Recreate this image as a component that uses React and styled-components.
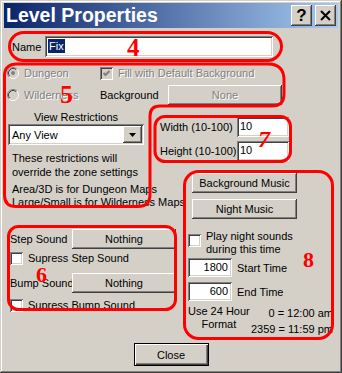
import React from "react";
import styled, { createGlobalStyle } from "styled-components";

const GlobalStyle = createGlobalStyle`
  html, body {
    margin: 0;
    padding: 0;
    background: #d4d0c8;
  }
  body {
    font-family: "Liberation Sans", Arial, sans-serif;
    font-size: 11px;
    color: #000;
  }
`;

const raised = `
  background: #d4d0c8;
  box-shadow: inset -1px -1px #404040, inset 1px 1px #ffffff,
    inset -2px -2px #808080, inset 2px 2px #d4d0c8;
`;

const sunken = `
  box-shadow: inset 1px 1px #808080, inset -1px -1px #ffffff,
    inset 2px 2px #404040, inset -2px -2px #d4d0c8;
`;

const Window = styled.div`
  position: relative;
  box-sizing: border-box;
  width: 342px;
  height: 373px;
  padding: 3px 4px 4px 4px;
  background: #d4d0c8;
  box-shadow: inset -1px -1px #404040, inset 1px 1px #d4d0c8,
    inset -2px -2px #808080, inset 2px 2px #ffffff;
  display: flex;
  flex-direction: column;
`;

const TitleBar = styled.div`
  height: 25px;
  display: flex;
  align-items: center;
  padding-left: 2px;
  background: linear-gradient(to right, #0a246a, #a6caf0);
`;

const Title = styled.div`
  color: #fff;
  font-weight: bold;
  font-size: 19.5px;
  line-height: 25px;
`;

const CaptionButtons = styled.div`
  margin-left: auto;
  margin-right: 2px;
  display: flex;
  gap: 3px;
`;

const CaptionButton = styled.div`
  ${raised}
  width: 21px;
  height: 21px;
  display: flex;
  align-items: center;
  justify-content: center;
  font-weight: bold;
  font-size: 17px;
  line-height: 1;
`;

const NameRow = styled.div`
  display: flex;
  align-items: center;
  margin-top: 8px;
  padding-left: 8px;
  height: 21px;
`;

const FieldLabel = styled.span`
  width: ${(p) => p.$w}px;
  flex-shrink: 0;
  white-space: nowrap;
`;

const TextField = styled.div`
  ${sunken}
  background: #fff;
  box-sizing: border-box;
  width: ${(p) => p.$w}px;
  height: ${(p) => p.$h}px;
  padding: ${(p) => (p.$right ? "2px 4px 0 2px" : "2px 2px 0 3px")};
  display: flex;
  align-items: flex-start;
  justify-content: ${(p) => (p.$right ? "flex-end" : "flex-start")};
  line-height: 14px;
  flex-shrink: 0;
`;

const Selection = styled.span`
  background: #0a246a;
  color: #fff;
  padding: 0 1px;
  margin-top: 1px;
`;

const OptionsGrid = styled.div`
  display: grid;
  grid-template-columns: 96px 1fr;
  grid-auto-rows: 22px;
  margin-top: 5px;
`;

const OptionItem = styled.div`
  display: flex;
  align-items: center;
  gap: ${(p) => p.$gap || 5}px;
  padding-left: ${(p) => p.$pad || 0}px;
  white-space: nowrap;
`;

const Muted = styled.span`
  color: #808080;
  text-shadow: 1px 1px #ffffff;
`;

const MainGrid = styled.div`
  display: grid;
  grid-template-columns: 152px 24px 1fr;
  grid-template-rows: 57px 46px auto;
  grid-template-areas:
    "view size size"
    "view . music"
    "sound sound music";
`;

const ViewArea = styled.div`
  grid-area: view;
  display: flex;
  flex-direction: column;
  padding-left: 4px;
`;

const ViewTitle = styled.div`
  width: 136px;
  text-align: center;
  line-height: 13px;
  margin-top: 5px;
`;

const ComboBox = styled.div`
  ${sunken}
  background: #fff;
  box-sizing: border-box;
  width: 136px;
  height: 21px;
  display: flex;
  align-items: center;
  padding: 2px;
`;

const ComboText = styled.span`
  flex: 1;
  padding-left: 2px;
`;

const ComboButton = styled.span`
  ${raised}
  width: 19px;
  height: 17px;
  display: flex;
  align-items: center;
  justify-content: center;
`;

const Note = styled.div`
  margin-top: ${(p) => p.$mt}px;
  padding-left: 4px;
  line-height: ${(p) => p.$lh}px;
  white-space: nowrap;
`;

const SizeArea = styled.div`
  grid-area: size;
  display: grid;
  grid-template-columns: 77px 52px;
  grid-auto-rows: 20px;
  row-gap: 4px;
  align-items: center;
  margin-top: 11px;
  padding-left: 4px;
  align-self: start;
`;

const PushButton = styled.div`
  ${raised}
  box-sizing: border-box;
  width: ${(p) => p.$w}px;
  height: ${(p) => p.$h || 20}px;
  margin-top: ${(p) => p.$mt || 0}px;
  margin-left: ${(p) => p.$ml || 0}px;
  display: flex;
  align-items: center;
  justify-content: center;
  flex-shrink: 0;
  white-space: nowrap;
  color: ${(p) => (p.$disabled ? "#808080" : "#000")};
  text-shadow: ${(p) => (p.$disabled ? "1px 1px #ffffff" : "none")};
`;

const SoundArea = styled.div`
  grid-area: sound;
  margin-top: 20px;
  padding-left: 6px;
  display: flex;
  flex-direction: column;
  align-self: start;
`;

const SoundRow = styled.div`
  display: flex;
  align-items: center;
  height: 20px;
  margin-top: ${(p) => p.$mt || 0}px;
`;

const CheckRow = styled.div`
  display: flex;
  align-items: ${(p) => (p.$top ? "flex-start" : "center")};
  gap: 5px;
  margin-top: ${(p) => p.$mt || 0}px;
  height: ${(p) => (p.$top ? "auto" : "13px")};
  line-height: 13px;
  white-space: nowrap;
`;

const Box = styled.span`
  ${sunken}
  box-sizing: border-box;
  width: 13px;
  height: 13px;
  flex-shrink: 0;
  margin-top: ${(p) => p.$mt || 0}px;
  background: ${(p) => (p.$disabled ? "#d4d0c8" : "#fff")};
  display: flex;
  align-items: center;
  justify-content: center;
`;

const MusicArea = styled.div`
  grid-area: music;
  margin-top: 10px;
  padding-left: 8px;
  padding-right: 5px;
  display: flex;
  flex-direction: column;
  align-self: start;
`;

const TimeRow = styled.div`
  display: flex;
  align-items: center;
  gap: 5px;
  margin-top: ${(p) => p.$mt}px;
`;

const FormatRow = styled.div`
  display: flex;
  justify-content: space-between;
  margin-top: 4px;
  white-space: nowrap;
`;

const FormatLeft = styled.div`
  text-align: center;
  line-height: 13px;
`;

const FormatRight = styled.div`
  text-align: right;
  line-height: 16px;
`;

const Footer = styled.div`
  display: flex;
  justify-content: center;
  margin-top: 6px;
`;

const CloseButton = styled.div`
  background: #d4d0c8;
  width: 75px;
  height: 23px;
  display: flex;
  align-items: center;
  justify-content: center;
  box-shadow: inset 1px 1px #000, inset -1px -1px #000,
    inset 2px 2px #fff, inset -2px -2px #404040, inset -3px -3px #808080;
`;

const Annotations = styled.svg`
  position: absolute;
  top: 0;
  left: 0;
  pointer-events: none;
`;

function Radio({ checked, disabled }) {
  const fill = disabled ? "#d4d0c8" : "#fff";
  return (
    <svg width="12" height="12" viewBox="0 0 12 12">
      <circle cx="6" cy="6" r="5" fill={fill} />
      <path d="M2.11 9.89 A5.5 5.5 0 0 1 9.89 2.11" stroke="#808080" fill="none" />
      <path d="M9.89 2.11 A5.5 5.5 0 0 1 2.11 9.89" stroke="#ffffff" fill="none" />
      <path d="M2.82 9.18 A4.5 4.5 0 0 1 9.18 2.82" stroke="#404040" fill="none" />
      <path d="M9.18 2.82 A4.5 4.5 0 0 1 2.82 9.18" stroke="#d4d0c8" fill="none" />
      {checked && <circle cx="6" cy="6" r="2" fill={disabled ? "#808080" : "#000"} />}
    </svg>
  );
}

function CheckBox({ checked, disabled, mt }) {
  return (
    <Box $disabled={disabled} $mt={mt}>
      {checked && (
        <svg width="9" height="9" viewBox="0 0 9 9">
          <polyline
            points="1.5,4 3.5,6 7.5,2"
            fill="none"
            stroke={disabled ? "#808080" : "#000"}
            strokeWidth="2"
          />
        </svg>
      )}
    </Box>
  );
}

export default function App() {
  return (
    <>
      <GlobalStyle />
      <Window>
        <TitleBar>
          <Title>Level Properties</Title>
          <CaptionButtons>
            <CaptionButton>?</CaptionButton>
            <CaptionButton>
              <svg width="11" height="11" viewBox="0 0 11 11">
                <path d="M1 1 L10 10 M10 1 L1 10" stroke="#000" strokeWidth="2" />
              </svg>
            </CaptionButton>
          </CaptionButtons>
        </TitleBar>

        <NameRow>
          <FieldLabel $w={33}>Name</FieldLabel>
          <TextField $w={228} $h={21}>
            <Selection>Fix</Selection>
          </TextField>
        </NameRow>

        <OptionsGrid>
          <OptionItem $pad={3}>
            <Radio checked disabled />
            <Muted>Dungeon</Muted>
          </OptionItem>
          <OptionItem>
            <CheckBox checked disabled />
            <Muted>Fill with Default Background</Muted>
          </OptionItem>
          <OptionItem $pad={3}>
            <Radio disabled />
            <Muted>Wilderness</Muted>
          </OptionItem>
          <OptionItem $gap={0}>
            <FieldLabel $w={63}>Background</FieldLabel>
            <PushButton $w={114} $disabled>None</PushButton>
          </OptionItem>
        </OptionsGrid>

        <MainGrid>
          <ViewArea>
            <ViewTitle>View Restrictions</ViewTitle>
            <ComboBox>
              <ComboText>Any View</ComboText>
              <ComboButton>
                <svg width="7" height="4" viewBox="0 0 7 4">
                  <polygon points="0,0 7,0 3.5,4" fill="#000" />
                </svg>
              </ComboButton>
            </ComboBox>
            <Note $mt={6} $lh={14}>
              These restrictions will
              <br />
              override the zone settings
            </Note>
            <Note $mt={4} $lh={13}>
              Area/3D is for Dungeon Maps
              <br />
              Large/Small is for Wilderness Maps
            </Note>
          </ViewArea>

          <SizeArea>
            <span>Width (10-100)</span>
            <TextField $w={52} $h={20}>10</TextField>
            <span>Height (10-100)</span>
            <TextField $w={52} $h={20}>10</TextField>
          </SizeArea>

          <SoundArea>
            <SoundRow>
              <FieldLabel $w={62}>Step Sound</FieldLabel>
              <PushButton $w={104}>Nothing</PushButton>
            </SoundRow>
            <CheckRow $mt={3}>
              <CheckBox />
              Supress Step Sound
            </CheckRow>
            <SoundRow $mt={8}>
              <FieldLabel $w={62}>Bump Sound</FieldLabel>
              <PushButton $w={104}>Nothing</PushButton>
            </SoundRow>
            <CheckRow $mt={6}>
              <CheckBox />
              Supress Bump Sound
            </CheckRow>
          </SoundArea>

          <MusicArea>
            <PushButton $w={105} $ml={4}>Background Music</PushButton>
            <PushButton $w={105} $ml={4} $mt={6}>Night Music</PushButton>
            <CheckRow $top $mt={11}>
              <CheckBox mt={4} />
              <span>
                Play night sounds
                <br />
                during this time
              </span>
            </CheckRow>
            <TimeRow $mt={2}>
              <TextField $w={44} $h={19} $right>1800</TextField>
              Start Time
            </TimeRow>
            <TimeRow $mt={5}>
              <TextField $w={44} $h={19} $right>600</TextField>
              End Time
            </TimeRow>
            <FormatRow>
              <FormatLeft>
                Use 24 Hour
                <br />
                Format
              </FormatLeft>
              <FormatRight>
                0 = 12:00 am
                <br />
                2359 = 11:59 pm
              </FormatRight>
            </FormatRow>
          </MusicArea>
        </MainGrid>

        <Footer>
          <CloseButton>Close</CloseButton>
        </Footer>

        <Annotations width="342" height="373" viewBox="0 0 342 373">
          <g fill="none" stroke="#ff0000" strokeWidth="3" strokeLinejoin="round">
            <rect x="9.5" y="32.5" width="272" height="28" rx="14" />
            <path d="M17 64 L268 64 Q284 64 284 80 L284 94 Q284 106 272 106 L160 106 Q150 106 150 116 L150 194 Q150 206.5 138 206.5 L16 206.5 Q4.5 206.5 4.5 195 L4.5 76 Q4.5 64 17 64 Z" />
            <rect x="155" y="116.5" width="135.5" height="45" rx="10" />
            <rect x="8.5" y="226.5" width="167" height="83" rx="10" />
            <rect x="184.5" y="171.5" width="148" height="167" rx="14" />
          </g>
          <g fill="#ff0000" fontFamily="'Liberation Serif', serif" fontWeight="bold">
            <text x="127" y="56" fontSize="25">4</text>
            <text x="60" y="103" fontSize="26">5</text>
            <text x="258" y="147" fontSize="24" fontStyle="italic">7</text>
            <text x="36" y="282" fontSize="22">6</text>
            <text x="303" y="267" fontSize="22">8</text>
          </g>
        </Annotations>
      </Window>
    </>
  );
}
